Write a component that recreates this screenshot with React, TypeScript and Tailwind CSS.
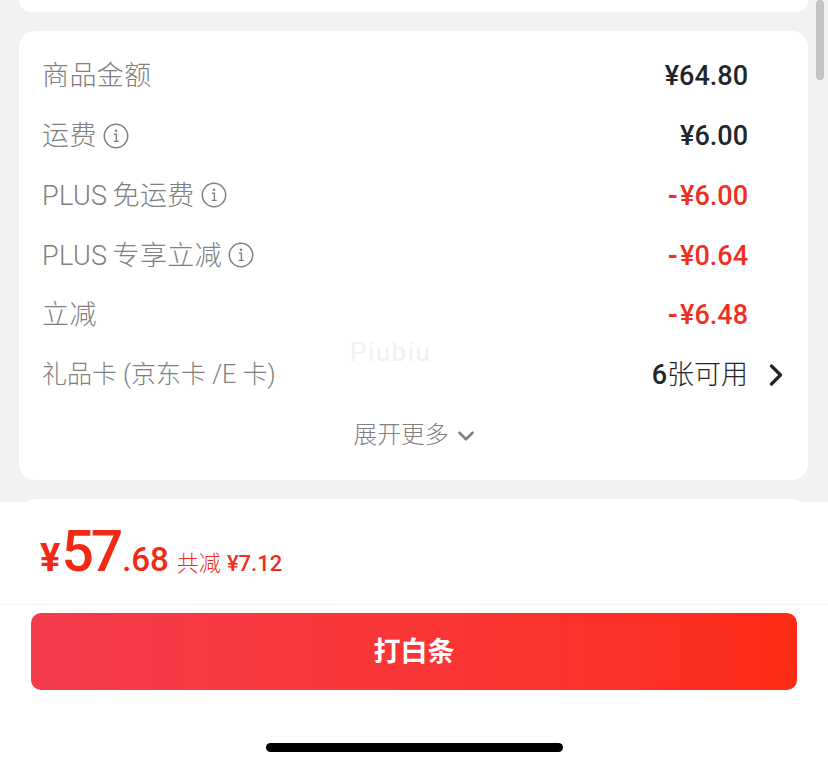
import { ChevronDown, ChevronRight } from "lucide-react";

const cjk = "font-['Roboto','Noto_Sans_CJK_SC',sans-serif]";

function InfoIcon() {
  return (
    <svg width="26" height="26" viewBox="0 0 26 26" fill="none" className="ml-[6px] shrink-0 text-[#808080]">
      <circle cx="13" cy="13" r="11.7" stroke="currentColor" strokeWidth="1.5" />
      <circle cx="13" cy="7.8" r="1.3" fill="currentColor" />
      <path d="M11 11.2h2.4v7M10.8 18.4h5" stroke="currentColor" strokeWidth="1.4" />
    </svg>
  );
}

const rows = [
  { label: "商品金额", amount: "¥64.80" },
  { label: "运费", amount: "¥6.00", info: true },
  { plus: true, label: "免运费", amount: "¥6.00", info: true, red: true },
  { plus: true, label: "专享立减", amount: "¥0.64", info: true, red: true },
  { label: "立减", amount: "¥6.48", red: true },
];

export default function App() {
  return (
    <div className={`relative flex h-[768px] w-[828px] flex-col overflow-hidden bg-[#f2f2f2] ${cjk}`}>
      <div className="ml-[19px] mr-5 h-3 rounded-b-[16px] bg-white" />

      <div className="relative ml-[19px] mr-5 mt-[19px] h-[449px] rounded-[16px] bg-white pl-[23px] pr-6 pt-[15px]">
        {rows.map((row) => (
          <div key={row.label} className="flex h-[59.8px] items-center justify-between pr-[36px]">
            <div className="flex items-center text-[27px] font-light tracking-[0.4px] text-[#808080]">
              <span className="pt-[1px]">
                {row.plus && <span className="mr-[5px]">PLUS</span>}
                {row.label}
              </span>
              {row.info && <InfoIcon />}
            </div>
            <div className={`pt-[1px] text-[27px] font-medium ${row.red ? "text-[#ee3023]" : "text-[#22262b]"}`}>
              {row.red && <span className="mr-[2px] font-bold">-</span>}
              {row.amount}
            </div>
          </div>
        ))}
        <div className="flex h-[59.8px] items-center justify-between">
          <div className="text-[25px] font-light text-[#808080]">礼品卡 (京东卡 /E 卡)</div>
          <div className="flex items-center text-[27px] font-light text-[#22262b]">
            <span className="font-medium">6</span>张可用
            <ChevronRight size={36} strokeWidth={2.2} className="-my-2 -mr-[10px] ml-[10px]" />
          </div>
        </div>
        <div className="flex h-[59.8px] items-center justify-center pl-[6px] pt-[2px] text-[23.75px] font-light text-[#808080]">
          展开更多
          <ChevronDown size={26} strokeWidth={2.4} className="ml-1" />
        </div>
        <div className="absolute left-[331px] top-[302px] text-[26px] tracking-[1.5px] text-[#f1f1f1]">Piubiu</div>
      </div>

      <div className="ml-[19px] mr-5 mt-[19px] h-[3px] overflow-hidden">
        <div className="h-10 rounded-[16px] bg-white" />
      </div>

      <div className="flex flex-1 flex-col bg-white">
        <div className="flex h-[103px] items-baseline border-b border-[#f6f6f6] pl-10 pt-4 text-[#f12a16]">
          <span className="text-[38px] font-bold leading-[68px]">¥</span>
          <span className="ml-[1px] text-[57px] font-medium leading-[68px] tracking-[-3px]">57</span>
          <span className="ml-[2px] text-[33px] font-medium">.68</span>
          <span className="ml-[8px] text-[22px] font-light text-[#ee3023]">共减</span>
          <span className="ml-[6px] text-[22px] font-medium text-[#ee3023]">¥7.12</span>
        </div>
        <div className="mx-[31px] mt-2 flex h-[77px] items-center justify-center rounded-[10px] bg-gradient-to-r from-[#f43c4b] to-[#fe2c14] pt-[1px] text-[27px] font-bold text-white">
          打白条
        </div>
        <div className="mx-auto mt-[53px] h-[9px] w-[297px] rounded-full bg-black" />
      </div>

      <div className="absolute right-1 top-0 h-20 w-2 rounded-full bg-[#c4c4c4]" />
    </div>
  );
}
